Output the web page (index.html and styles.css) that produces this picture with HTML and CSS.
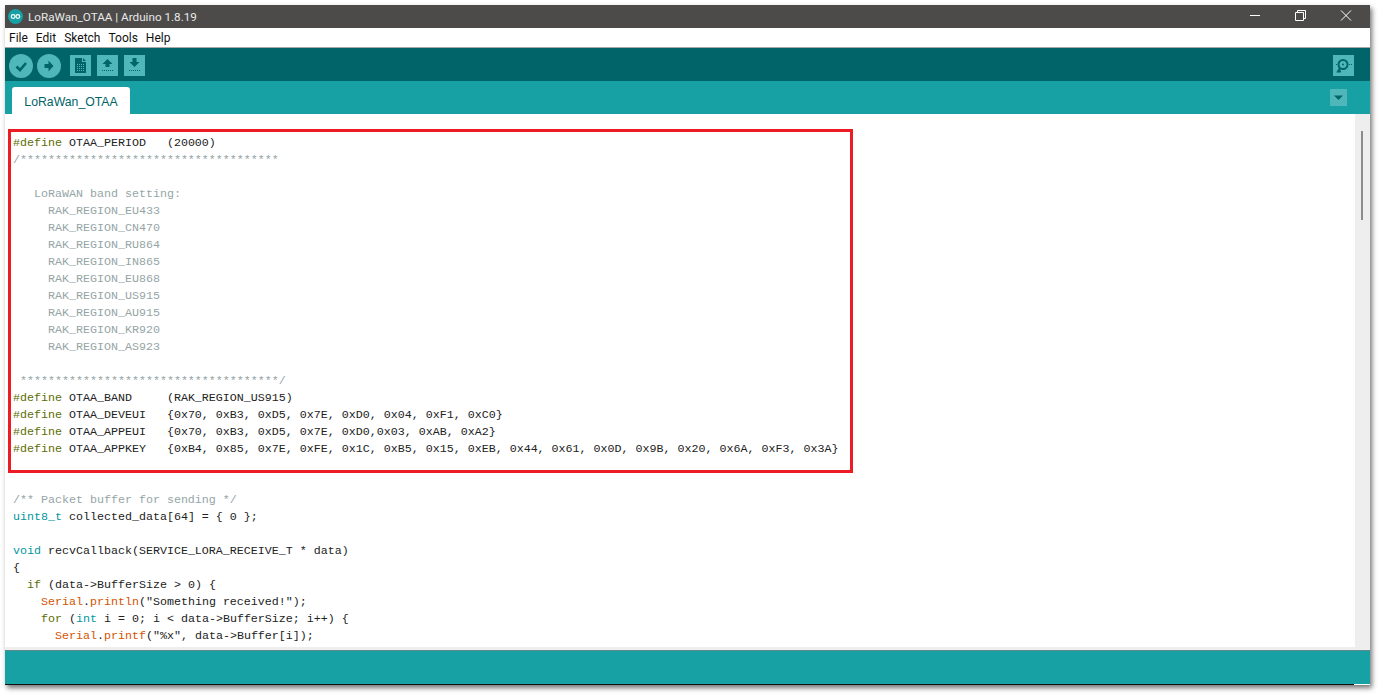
FILE: index.html
```html
<!DOCTYPE html>
<html lang="en">
<head>
<meta charset="utf-8">
<title>LoRaWan_OTAA | Arduino 1.8.19</title>
<link rel="stylesheet" href="styles.css">
</head>
<body>
<div class="window">
  <header class="titlebar">
    <svg class="app-icon" viewBox="0 0 16 16"><circle cx="8" cy="8" r="8" fill="#17a1a5"/><g fill="none" stroke="#fff" stroke-width="1.3"><circle cx="5.5" cy="8" r="2"/><circle cx="10.5" cy="8" r="2"/></g></svg>
    <span class="title">LoRaWan_OTAA | Arduino 1.8.19</span>
    <div class="controls">
      <svg class="ctl" viewBox="0 0 46 23"><path d="M18 10.500h10" stroke="#fff" fill="none"/></svg>
      <svg class="ctl" viewBox="0 0 46 23"><path d="M17.500 7.500h8v8h-8zM19.500 7.500v-2h8v8h-2" stroke="#fff" fill="none"/></svg>
      <svg class="ctl" viewBox="0 0 46 23"><path d="M17 5.500l10 10M27 5.500l-10 10" stroke="#fff" fill="none"/></svg>
    </div>
  </header>
  <nav class="menubar"><span>File</span><span>Edit</span><span>Sketch</span><span>Tools</span><span>Help</span></nav>
  <div class="toolbar">
    <button class="round"><svg viewBox="0 0 24 24"><path d="M7.500 12.500l3.500 3.500 6-7" fill="none" stroke="#006468" stroke-width="2.600"/></svg></button>
    <button class="round"><svg viewBox="0 0 24 24"><path d="M7.500 10h4v-3.500l5 5.500-5 5.500v-3.500h-4z" fill="#006468"/></svg></button>
    <button class="square first"><svg viewBox="0 0 21 21"><path d="M5 3h7v4h4v11h-11z" fill="#006468"/><path d="M13 3l3 3h-3z" fill="#006468"/><path d="M7 9.500h7M7 11.500h7M7 13.500h7M7 15.500h7" stroke="#4fb7ba" stroke-dasharray="1 1" fill="none"/></svg></button>
    <button class="square"><svg viewBox="0 0 21 21"><path d="M10.500 4l5 5h-3v3h-4v-3h-3z" fill="#006468"/><path d="M5 15.500h11" stroke="#006468" stroke-dasharray="1 1" fill="none"/></svg></button>
    <button class="square"><svg viewBox="0 0 21 21"><path d="M8.500 3h4v4h3l-5 5-5-5h3z" fill="#006468"/><path d="M5 15.500h11" stroke="#006468" stroke-dasharray="1 1" fill="none"/></svg></button>
    <button class="square serial"><svg viewBox="0 0 21 21"><circle cx="10" cy="9.500" r="4.500" fill="none" stroke="#006468" stroke-width="2"/><circle cx="10" cy="9.500" r="1" fill="#006468"/><path d="M7 13l-2 3.500h3" fill="none" stroke="#006468" stroke-width="2"/><path d="M3 9.500h1M16 9.500h1M18 9.500h1" stroke="#006468"/></svg></button>
  </div>
  <div class="tabbar">
    <div class="tab">LoRaWan_OTAA</div>
    <button class="tab-menu"><svg viewBox="0 0 17 17"><path d="M4 6.500h9l-4.500 4.500z" fill="#006468"/></svg></button>
  </div>
  <main class="editor">
<pre class="code"><span class="kw">#define</span> OTAA_PERIOD   (20000)
<span class="cm">/*************************************

   LoRaWAN band setting:
     RAK_REGION_EU433
     RAK_REGION_CN470
     RAK_REGION_RU864
     RAK_REGION_IN865
     RAK_REGION_EU868
     RAK_REGION_US915
     RAK_REGION_AU915
     RAK_REGION_KR920
     RAK_REGION_AS923

 *************************************/</span>
<span class="kw">#define</span> OTAA_BAND     (RAK_REGION_US915)
<span class="kw">#define</span> OTAA_DEVEUI   {0x70, 0xB3, 0xD5, 0x7E, 0xD0, 0x04, 0xF1, 0xC0}
<span class="kw">#define</span> OTAA_APPEUI   {0x70, 0xB3, 0xD5, 0x7E, 0xD0,0x03, 0xAB, 0xA2}
<span class="kw">#define</span> OTAA_APPKEY   {0xB4, 0x85, 0x7E, 0xFE, 0x1C, 0xB5, 0x15, 0xEB, 0x44, 0x61, 0x0D, 0x9B, 0x20, 0x6A, 0xF3, 0x3A}


<span class="cm">/** Packet buffer for sending */</span>
<span class="ty">uint8_t</span> collected_data[64] = { 0 };

<span class="ty">void</span> recvCallback(SERVICE_LORA_RECEIVE_T * data)
{
  <span class="kw">if</span> (data-&gt;BufferSize &gt; 0) {
    <span class="fn">Serial</span>.<span class="fn">println</span>("Something received!");
    <span class="kw">for</span> (<span class="ty">int</span> i = 0; i &lt; data-&gt;BufferSize; i++) {
      <span class="fn">Serial</span>.<span class="fn">printf</span>("%x", data-&gt;Buffer[i]);</pre>
    <div class="scrollbar"><div class="thumb"></div></div>
    <div class="highlight"></div>
  </main>
  <div class="divider"></div>
  <footer class="status"><div class="status-line"></div></footer>
</div>
</body>
</html>
```
FILE: styles.css
```css
* { box-sizing: border-box; }
html, body { margin: 0; height: 100%; background: #fff; overflow: hidden; }
body { padding: 5px 9px 10px 5px; font-family: Roboto, "Liberation Sans", sans-serif; }
.window { height: 680px; width: 1365px; display: flex; flex-direction: column; background: #fff; box-shadow: 2px 3px 5px rgba(0,0,0,.55); }
.titlebar { height: 23px; background: #4d4b49; display: flex; align-items: center; padding-left: 3px; color: #fff; flex: none; }
.app-icon { width: 15px; height: 15px; flex: none; }
.title { margin-left: 5px; font-size: 11.700px; color: #e8e8e8; white-space: nowrap; }
.controls { margin-left: auto; display: flex; }
.ctl { width: 46px; height: 23px; display: block; }
.menubar { height: 19px; display: flex; gap: 8px; padding-left: 4px; align-items: center; font-size: 12px; color: #111; background: #fff; flex: none; }
.toolbar { height: 34px; flex: none; background: #006468; border-top: 1px solid #a8a8a8; padding-top: 6px; display: flex; align-items: flex-start; gap: 4px; padding-left: 4px; padding-right: 16px; }
button { border: 0; padding: 0; margin: 0; background: #4fb7ba; display: block; flex: none; }
.round { width: 24px; height: 24px; border-radius: 50%; }
.round svg, .square svg, .tab-menu svg { display: block; width: 100%; height: 100%; }
.square { width: 21px; height: 21px; margin-top: 1px; margin-left: 2px; }
.first { margin-left: 5px; }
.serial { margin-left: auto; }
.tabbar { height: 33px; flex: none; background: #17a1a5; display: flex; padding-left: 7px; padding-right: 23px; justify-content: space-between; }
.tab { width: 118px; height: 27px; margin-top: 6px; background: #fff; border-radius: 3px 3px 0 0; color: #006468; font: 12.250px/30px "Liberation Sans", sans-serif; text-align: center; }
.tab-menu { width: 17px; height: 17px; margin-top: 8px; }
.editor { position: relative; flex: 1; background: #fff; overflow: hidden; display: flex; }
.code { flex: 1; margin: 21px 0 0 8px; font: 11.660px/17px "Liberation Mono", monospace; color: #222; overflow: hidden; }
.kw { color: #5e6d03; }
.cm { color: #95a5a6; }
.ty { color: #00979c; }
.fn { color: #d35400; }
.scrollbar { width: 15px; flex: none; background: #eee; position: relative; }
.thumb { width: 2px; margin: 17px 0 0 6px; height: 89px; background: #8c8c8c; }
.highlight { position: absolute; left: 3px; top: 15px; width: 845px; height: 344px; border: 3px solid #ed1c24; pointer-events: none; }
.divider { height: 4px; flex: none; background: #eeeeee; border-bottom: 1px solid #5f8a8c; }
.status { height: 34px; flex: none; background: linear-gradient(to top, #fff 1px, #17a1a5 1px); display: flex; align-items: flex-end; }
.status-line { width: 1349px; height: 1px; background: #111; }
```
